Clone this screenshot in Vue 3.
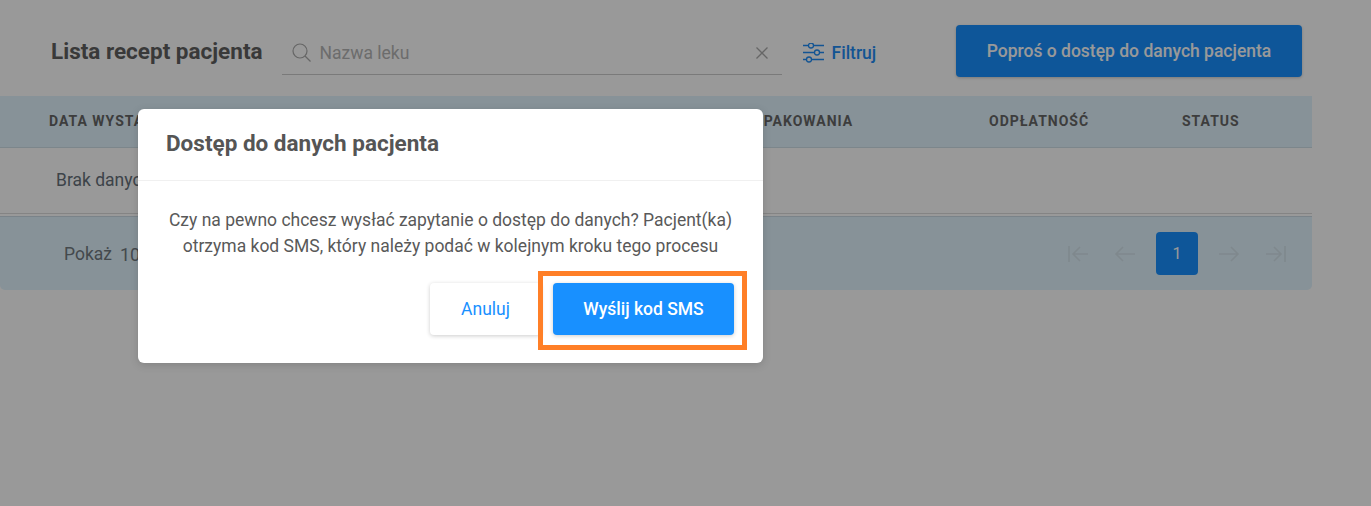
<template>
  <div class="page">
    <div class="toolbar">
      <h2 class="title">Lista recept pacjenta</h2>
      <div class="search">
        <svg class="search-icon" width="20" height="20" viewBox="0 0 20 20" fill="none" stroke="currentColor" stroke-width="1.2">
          <circle cx="8" cy="8" r="7" />
          <path d="M13 13 18.500 18.500" />
        </svg>
        <span class="placeholder">Nazwa leku</span>
        <svg class="clear" width="14" height="14" viewBox="0 0 14 14" fill="none" stroke="currentColor" stroke-width="1.3">
          <path d="M1.5 1.5 12.500 12.500M12.500 1.500 1.500 12.500" />
        </svg>
      </div>
      <div class="filter">
        <svg width="21" height="20" viewBox="0 0 21 20" fill="none" stroke="currentColor" stroke-width="1.3">
          <path d="M0 2.500h5.500M10.500 2.500H21M0 9.500h11.500M16.500 9.500H21M0 16.500h3.500M8.500 16.500H21" />
          <circle cx="8" cy="2.500" r="2.500" />
          <circle cx="14" cy="9.500" r="2.500" />
          <circle cx="6" cy="16.500" r="2.500" />
        </svg>
        <span>Filtruj</span>
      </div>
      <button class="request" type="button">Poproś o dostęp do danych pacjenta</button>
    </div>

    <div class="table">
      <div class="thead">
        <span v-for="col in columns" :key="col">{{ col }}</span>
      </div>
      <div class="empty">Brak danych</div>
      <div class="tfoot">
        <div class="page-size">
          <span>Pokaż</span>
          <span class="size">10</span>
        </div>
        <div class="pager">
          <svg width="22" height="20" viewBox="0 0 22 20" fill="none" stroke="currentColor" stroke-width="1.600">
            <path d="M2 2v16M21 10H6M13 3l-7 7 7 7" />
          </svg>
          <svg width="22" height="20" viewBox="0 0 22 20" fill="none" stroke="currentColor" stroke-width="1.600">
            <path d="M21 10H2M9 3l-7 7 7 7" />
          </svg>
          <span class="current">1</span>
          <svg width="22" height="20" viewBox="0 0 22 20" fill="none" stroke="currentColor" stroke-width="1.600">
            <path d="M1 10h19M13 3l7 7-7 7" />
          </svg>
          <svg width="22" height="20" viewBox="0 0 22 20" fill="none" stroke="currentColor" stroke-width="1.600">
            <path d="M20 2v16M1 10h15M9 3l7 7-7 7" />
          </svg>
        </div>
      </div>
    </div>

    <div class="overlay"></div>

    <div class="modal">
      <div class="modal-head">Dostęp do danych pacjenta</div>
      <div class="modal-body">
        Czy na pewno chcesz wysłać zapytanie o dostęp do danych? Pacjent(ka) otrzyma kod SMS, który należy podać w kolejnym kroku tego procesu
      </div>
      <div class="modal-actions">
        <button class="cancel" type="button">Anuluj</button>
        <button class="send" type="button">Wyślij kod SMS</button>
      </div>
    </div>

    <div class="highlight"></div>
  </div>
</template>

<script setup>
const columns = ['DATA WYSTAWIENIA', 'NAZWA LEKU', 'OPAKOWANIA', 'ODPŁATNOŚĆ', 'STATUS']
</script>

<style>
html,
body {
  margin: 0;
  background: #fff;
}
</style>

<style scoped>
.page {
  position: relative;
  width: 1371px;
  height: 506px;
  overflow: hidden;
  background: #fff;
  font-family: Roboto, "Liberation Sans", sans-serif;
  color: #3c4043;
}
.toolbar {
  display: flex;
  align-items: center;
  height: 52px;
  padding: 25px 69px 19px 51px;
}
.title {
  margin: 0 19px 0 0;
  font-size: 22.5px;
  font-weight: 700;
  color: #5f5f5f;
  white-space: nowrap;
}
.search {
  display: flex;
  align-items: center;
  width: 500px;
  height: 46px;
  margin-top: 2px;
  padding: 3px 13px 0 10px;
  box-sizing: border-box;
  border-bottom: 1px solid #ccc;
  color: #aaa;
}
.search-icon {
  margin-right: 8px;
}
.placeholder {
  flex: 1;
  font-size: 17.5px;
  color: #b5b5b5;
}
.clear {
  color: #aaa;
}
.filter {
  display: flex;
  align-items: center;
  gap: 8px;
  margin-left: 21px;
  padding-top: 4px;
  color: #1f8cf5;
  font-size: 17.5px;
  font-weight: 500;
}
.request {
  width: 346px;
  height: 52px;
  margin-left: auto;
  padding: 0 0 1px;
  border: 0;
  border-radius: 4px;
  background: #1890ff;
  color: #fff;
  font: 500 17.5px Roboto, "Liberation Sans", sans-serif;
  box-shadow: 0 1px 3px rgba(0, 0, 0, 0.2);
}
.table {
  width: 1312px;
}
.thead {
  display: grid;
  grid-template-columns: 300px 404px 236px 193px 1fr;
  align-items: center;
  height: 52px;
  padding: 0 0 2px 49px;
  box-sizing: border-box;
  background: #e1f3fd;
  border-bottom: 1px solid #cfdfe8;
  font-size: 14px;
  font-weight: 700;
  letter-spacing: 1px;
  color: #666;
  white-space: nowrap;
}
.empty {
  display: flex;
  align-items: center;
  height: 66px;
  padding: 0 0 2px 56px;
  box-sizing: border-box;
  border-bottom: 1px solid #ddd;
  font-size: 17.5px;
  color: #66707a;
}
.tfoot {
  display: flex;
  align-items: center;
  justify-content: space-between;
  height: 74px;
  margin-top: 2px;
  padding: 0 25px 0 64px;
  background: #e1f3fd;
  border-top: 1px solid #ccdbe4;
  border-radius: 0 0 5px 5px;
  box-sizing: border-box;
}
.page-size {
  display: flex;
  gap: 8px;
  padding-top: 1px;
  font-size: 17.5px;
  color: #727a80;
}
.size {
  font-size: 18px;
}
.pager {
  display: flex;
  align-items: center;
  gap: 25px;
  color: #d4e3ec;
}
.current {
  display: flex;
  align-items: center;
  justify-content: center;
  width: 42px;
  height: 43px;
  margin: 0 -5px;
  border-radius: 4px;
  background: #1890ff;
  color: #fff;
  font-size: 16px;
}
.overlay {
  position: absolute;
  inset: 0;
  background: rgba(0, 0, 0, 0.4);
}
.modal {
  position: absolute;
  left: 138px;
  top: 109px;
  width: 625px;
  height: 254px;
  border-radius: 6px;
  background: #fff;
  box-shadow: 0 2px 8px rgba(0, 0, 0, 0.15);
}
.modal-head {
  display: flex;
  align-items: center;
  height: 72px;
  padding: 0 0 4px 28px;
  box-sizing: border-box;
  border-bottom: 1px solid #f0f0f0;
  font-size: 22.5px;
  font-weight: 700;
  color: #555;
}
.modal-body {
  width: 570px;
  margin: 26px auto 0;
  font-size: 17.5px;
  line-height: 26px;
  text-align: center;
  color: #595959;
}
.modal-actions {
  display: flex;
  justify-content: flex-end;
  gap: 12px;
  margin-top: 24px;
  padding-right: 29px;
}
.modal-actions button {
  height: 52px;
  padding: 0;
  border: 0;
  border-radius: 4px;
  font: 500 17.5px Roboto, "Liberation Sans", sans-serif;
}
.modal-actions .cancel {
  width: 111px;
  background: #fff;
  color: #1890ff;
  font-weight: 400;
  box-shadow: 0 1px 4px rgba(0, 0, 0, 0.2);
}
.send {
  width: 181px;
  background: #1890ff;
  color: #fff;
  box-shadow: 0 1px 4px rgba(0, 0, 0, 0.2);
}
.highlight {
  position: absolute;
  left: 538px;
  top: 271px;
  width: 209px;
  height: 79px;
  box-sizing: border-box;
  border: 5px solid #ff7f27;
}
</style>
